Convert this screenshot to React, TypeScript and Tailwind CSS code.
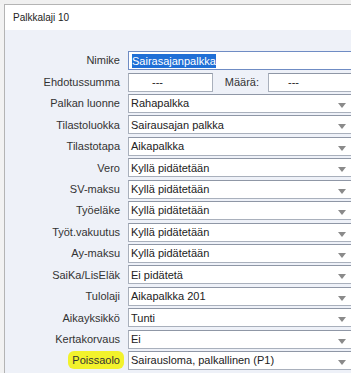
import React from "react";

const font = { fontFamily: '"Liberation Sans", Arial, sans-serif' };

function Arrow() {
  return (
    <svg width="8" height="5" viewBox="0 0 8 5" className="absolute right-[7px] top-[8px]">
      <polygon points="0,0 8,0 4,5" fill="#8a8a8a" />
    </svg>
  );
}

function Select({ value }: { value: string }) {
  return (
    <div className="relative h-[19px] w-[226px] bg-white border border-[#a9b0bc] border-t-[#8f97a6] flex items-center pl-[2px] text-[11px] text-[#222]">
      <span>{value}</span>
      <Arrow />
    </div>
  );
}

function Row({ label, children, highlight }: { label: string; children: React.ReactNode; highlight?: boolean }) {
  return (
    <div className="flex items-center h-[21.43px]">
      <div className="w-[115px] shrink-0 text-right text-[11px] text-[#333]">
        {highlight ? (
          <span className="bg-[#f2f22c] rounded-[6px] px-[4px] py-[3px] mr-[-4px]">{label}</span>
        ) : (
          label
        )}
      </div>
      <div className="ml-[8px] shrink-0">{children}</div>
    </div>
  );
}

export default function App() {
  const selects: [string, string][] = [
    ["Palkan luonne", "Rahapalkka"],
    ["Tilastoluokka", "Sairausajan palkka"],
    ["Tilastotapa", "Aikapalkka"],
    ["Vero", "Kyllä pidätetään"],
    ["SV-maksu", "Kyllä pidätetään"],
    ["Työeläke", "Kyllä pidätetään"],
    ["Työt.vakuutus", "Kyllä pidätetään"],
    ["Ay-maksu", "Kyllä pidätetään"],
    ["SaiKa/LisEläk", "Ei pidätetä"],
    ["Tulolaji", "Aikapalkka 201"],
    ["Aikayksikkö", "Tunti"],
    ["Kertakorvaus", "Ei"],
  ];
  return (
    <div className="w-[351px] h-[373px] overflow-hidden bg-[#f2f2f2] flex flex-col" style={font}>
      <div className="h-[4px] shrink-0 bg-[#f0f0f0]" />
      <div className="flex-1 flex flex-col ml-[4px] border-l border-t border-[#b4b4b4] overflow-hidden">
        <div className="h-[25px] shrink-0 bg-white flex items-center pl-[8px] text-[10px] text-[#222]">
          Palkkalaji 10
        </div>
        <div className="flex-1 bg-[#eef1f8] pt-[20px]">
          <Row label="Nimike">
            <div className="h-[19px] w-[226px] bg-white border border-[#6f8cc4] flex items-center pl-[3px] text-[11px]">
              <span className="bg-[#1f6fd6] text-white leading-[14px]">Sairasajanpalkka</span>
            </div>
          </Row>
          <Row label="Ehdotussumma">
            <div className="flex items-center">
              <div className="h-[19px] w-[85px] bg-white border border-[#a9b0bc] border-t-[#8f97a6] flex items-center pl-[23px] text-[11px] text-[#222]">
                ---
              </div>
              <div className="w-[55px] text-right pr-[9px] text-[11px] text-[#333]">Määrä:</div>
              <div className="h-[19px] w-[86px] bg-white border border-[#a9b0bc] border-t-[#8f97a6] flex items-center pl-[19px] text-[11px] text-[#222]">
                ---
              </div>
            </div>
          </Row>
          {selects.map(([l, v]) => (
            <Row key={l} label={l}>
              <Select value={v} />
            </Row>
          ))}
          <Row label="Poissaolo" highlight>
            <Select value="Sairausloma, palkallinen (P1)" />
          </Row>
        </div>
      </div>
    </div>
  );
}
